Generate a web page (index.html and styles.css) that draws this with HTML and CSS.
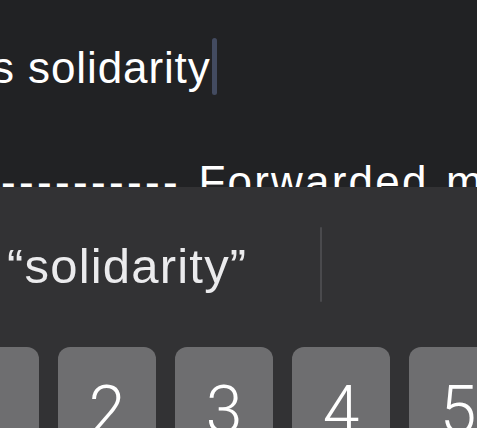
FILE: index.html
```html
<!DOCTYPE html>
<html>
<head>
<meta charset="utf-8">
<link rel="stylesheet" href="styles.css">
</head>
<body>
<div class="screen">
  <div class="editor">
    <div class="line line-first"><span class="text">s solidarity</span><span class="cursor"></span></div>
    <div class="line"></div>
    <div class="line line-fwd"><span class="dashes">----------</span><span class="fwd"> Forwarded message</span></div>
  </div>
  <div class="keyboard">
    <div class="suggest">
      <div class="suggest-item">“solidarity”</div>
      <div class="divider"></div>
    </div>
    <div class="keys">
      <div class="key">1</div>
      <div class="key">2</div>
      <div class="key">3</div>
      <div class="key">4</div>
      <div class="key">5</div>
    </div>
  </div>
</div>
</body>
</html>
```

FILE: styles.css
```css
html, body {
  margin: 0;
  padding: 0;
  background: #212224;
}
.screen {
  width: 477px;
  height: 428px;
  overflow: hidden;
  display: flex;
  flex-direction: column;
}
.editor {
  height: 148px;
  padding-top: 39px;
  background: #212224;
  color: #ffffff;
  font-family: "Liberation Sans", Arial, sans-serif;
  font-size: 44px;
  line-height: 57px;
  overflow: hidden;
  flex: none;
}
.line {
  height: 57px;
  white-space: nowrap;
}
.line-first {
  margin-left: -8px;
  display: flex;
  align-items: flex-start;
}
.text {
  letter-spacing: 0.9px;
}
.cursor {
  display: inline-block;
  width: 5px;
  height: 57px;
  margin-left: 1px;
  margin-top: -1px;
  border-radius: 3px;
  background: #434b60;
}
.line-fwd {
  margin-left: 1px;
}
.dashes {
  letter-spacing: 3.35px;
}
.fwd {
  letter-spacing: 2.2px;
  word-spacing: 3px;
}
.keyboard {
  flex: 1;
  background: #323234;
  display: flex;
  flex-direction: column;
}
.suggest {
  height: 160px;
  display: flex;
  align-items: flex-start;
  flex: none;
}
.suggest-item {
  width: 313px;
  padding-left: 7px;
  margin-top: 49px;
  font-family: "Liberation Sans", Arial, sans-serif;
  font-size: 49px;
  line-height: 60px;
  letter-spacing: 1.2px;
  color: #ebebed;
  white-space: nowrap;
}
.divider {
  width: 2px;
  height: 75px;
  margin-top: 40px;
  background: #4a4a4d;
  border-radius: 1px;
}
.keys {
  display: flex;
  gap: 19px;
  margin-left: -59px;
}
.key {
  flex: none;
  width: 98px;
  height: 120px;
  box-sizing: border-box;
  padding-top: 31px;
  border-radius: 12px;
  background: #6e6e70;
  color: #ffffff;
  text-align: center;
  font-family: Roboto, "Liberation Sans", sans-serif;
  font-weight: 300;
  font-size: 66px;
  line-height: 66px;
}
```
